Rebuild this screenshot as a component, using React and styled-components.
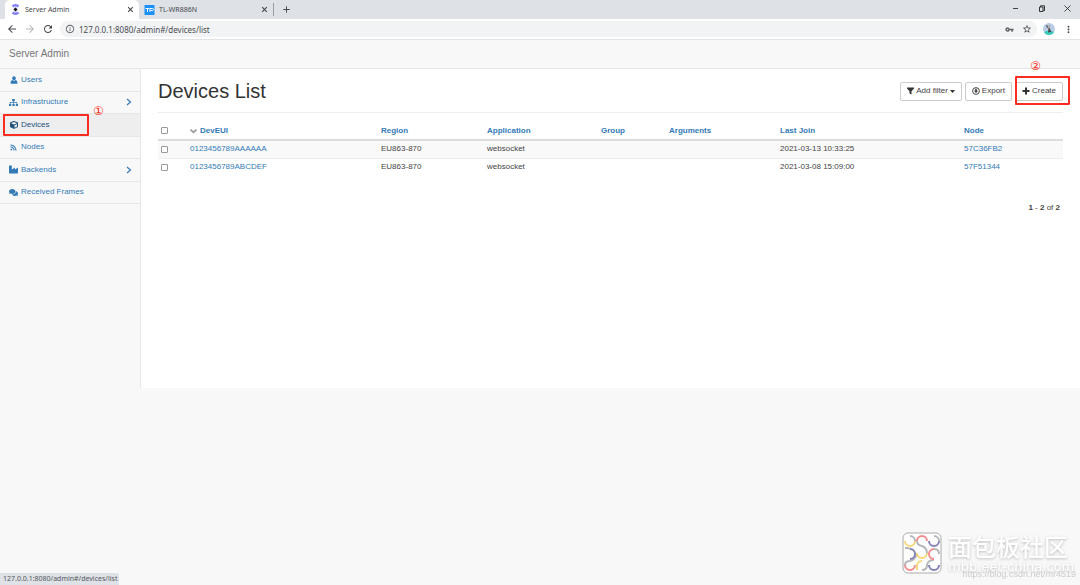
import React from 'react';
import styled, { createGlobalStyle, css } from 'styled-components';
import { FaSitemap, FaCube, FaRss, FaIndustry, FaComments } from 'react-icons/fa';
import {
  MdArrowBack, MdArrowForward, MdRefresh, MdInfoOutline, MdVpnKey, MdStarBorder, MdMoreVert, MdAdd,
} from 'react-icons/md';

const uiFont = "'Noto Sans', 'Open Sans', sans-serif";
const link = '#337ab7';

const GlobalStyle = createGlobalStyle`
  * {
    box-sizing: border-box;
  }

  body {
    margin: 0;
    background-color: #f8f8f8;
    color: #444;
    font-family: 'Liberation Sans', Arial, sans-serif;
    font-size: 8px;
    line-height: 12px;
  }

  a {
    color: ${link};
    text-decoration: none;
  }

  button {
    padding: 0;
    border: 0;
    background: none;
    color: inherit;
    font: inherit;
  }
`;

const Page = styled.div`
  display: flex;
  flex-direction: column;
  min-height: 100vh;
`;

const TabStrip = styled.div`
  display: flex;
  height: 19px;
  padding-left: 5px;
  background-color: #dee1e6;
  font-family: ${uiFont};
  font-size: 7px;
`;

const Tab = styled.div`
  display: flex;
  align-items: center;
  gap: 4px;
  width: 134px;
  padding: 0 5px;
  border-radius: 5px 5px 0 0;
  color: #45494d;
  background-color: ${props => (props.$active ? '#fff' : 'transparent')};
`;

const TabTitle = styled.span`
  flex: 1;
`;

const IconButton = styled.button`
  display: flex;
  align-items: center;
  justify-content: center;
  color: ${props => props.$color || '#45494d'};
`;

const NewTab = styled(IconButton)`
  align-self: center;
  height: 13px;
  padding-left: 7px;
  border-left: 1px solid #9a9da1;
`;

const WindowControls = styled.div`
  display: flex;
  align-items: center;
  gap: 19px;
  height: 16px;
  margin-left: auto;
  padding-right: 9px;
`;

const Toolbar = styled.div`
  display: flex;
  align-items: center;
  gap: 6px;
  height: 21px;
  padding: 0 6px;
  border-bottom: 1px solid #e2e3e5;
  background-color: #fff;
`;

const ToolbarActions = styled.div`
  display: flex;
  align-items: center;
  gap: 8px;
`;

const AddressBar = styled.div`
  display: flex;
  flex: 1;
  align-items: center;
  gap: 4px;
  height: 16px;
  padding: 0 5px;
  border-radius: 8px;
  background-color: #f1f3f4;
  color: #5f6368;
`;

const Address = styled.input`
  flex: 1;
  min-width: 0;
  padding: 0;
  border: 0;
  outline: 0;
  background: none;
  color: #4a4d51;
  font-family: ${uiFont};
  font-size: 8px;
`;

const Navbar = styled.header`
  display: flex;
  align-items: center;
  height: 29px;
  padding: 0 9px;
  border-bottom: 1px solid #e7e7e7;
`;

const Brand = styled.a`
  color: #777;
  font-size: 10px;
`;

const Body = styled.div`
  display: flex;
  min-height: 319px;
`;

const Sidebar = styled.nav`
  width: 141px;
  border-right: 1px solid #e7e7e7;
`;

const Menu = styled.ul`
  display: grid;
  grid-auto-rows: 1fr;
  min-height: 135px;
  margin: 0;
  padding: 0;
  list-style: none;
`;

const MenuItem = styled.li`
  position: relative;
  border-bottom: 1px solid #e7e7e7;
  background-color: ${props => (props.$active ? '#eee' : 'transparent')};
`;

const MenuLink = styled.a`
  display: flex;
  align-items: center;
  gap: 3px;
  height: 100%;
  padding: 0 8px 0 9px;
  color: ${props => (props.$active ? '#23527c' : link)};
`;

const MenuIcon = styled.span`
  display: flex;
  justify-content: center;
  width: 9px;
`;

const MenuText = styled.span`
  flex: 1;
`;

const callout = css`
  position: absolute;
  border: 2px solid #fb2c20;
  border-radius: 1px;
  pointer-events: none;
`;

const MenuCallout = styled.div`
  ${callout}
  inset: 0 51px 0 3px;
`;

const CreateCallout = styled.div`
  ${callout}
  inset: -6px -7px -4px 0;
`;

const CalloutNumber = styled.span`
  position: absolute;
  top: ${props => props.$top};
  left: ${props => props.$left};
  color: #fb2c20;
  font-family: 'DejaVu Sans', sans-serif;
  font-size: 12px;
`;

const Content = styled.main`
  flex: 1;
  min-width: 0;
  padding: 8px 17px;
  background-color: #fff;
`;

const TitleRow = styled.div`
  display: flex;
  align-items: center;
  justify-content: space-between;
  height: 36px;
  padding-bottom: 7px;
  border-bottom: 1px solid #eee;
`;

const Title = styled.h1`
  margin: 0;
  color: #333;
  font-size: 20px;
  font-weight: 400;
  line-height: 28px;
`;

const Actions = styled.div`
  display: flex;
  gap: 3px;
`;

const ActionWrap = styled.div`
  position: relative;
`;

const Button = styled.button`
  display: flex;
  align-items: center;
  gap: 2px;
  height: 19px;
  padding: 0 6px;
  border: 1px solid #ccc;
  border-radius: 2px;
  background-color: #fff;
  white-space: nowrap;
`;

const Table = styled.table`
  width: 100%;
  margin-top: 9px;
  border-collapse: collapse;
  table-layout: fixed;

  th,
  td {
    height: 18px;
    padding: 0 3px;
    text-align: left;
    vertical-align: middle;
  }

  th {
    border-bottom: 2px solid #ddd;
  }

  td {
    border-bottom: 1px solid #eee;
  }

  tbody tr:nth-child(odd) {
    background-color: #f9f9f9;
  }

  tbody tr:last-child td {
    border-bottom: 0;
  }
`;

const SortLink = styled.a`
  display: flex;
  align-items: center;
  gap: 3px;
`;

const Checkbox = styled.input`
  display: block;
  width: 7px;
  height: 7px;
  margin: 0;
  border: 1px solid #999;
  border-radius: 1px;
  background-color: #fff;
  appearance: none;

  &:checked {
    background-color: ${link};
  }
`;

const Pagination = styled.div`
  margin-top: 26px;
  padding-right: 3px;
  text-align: right;
`;

const StatusBar = styled.div`
  position: fixed;
  bottom: 0;
  left: 0;
  height: 12px;
  padding: 0 2px 0 3px;
  border-radius: 0 2px 0 0;
  background-color: #dee1e6;
  color: #55595e;
  font-family: ${uiFont};
  font-size: 7px;
`;

const Watermark = styled.div`
  position: fixed;
  right: 4px;
  bottom: 5px;
  display: flex;
  align-items: flex-start;
  gap: 6px;
  width: 174px;
  height: 48px;
`;

const WatermarkText = styled.div`
  color: #fff;
  font-family: 'Noto Sans CJK SC', sans-serif;
  font-size: 24px;
  font-weight: 500;
  line-height: 28px;
  text-shadow: 0 1px 3px #bbb;
  white-space: nowrap;
`;

const WatermarkSite = styled.div`
  font-family: 'DejaVu Sans', sans-serif;
  font-size: 13px;
  line-height: 14px;
`;

const WatermarkUrl = styled.div`
  position: absolute;
  right: 0;
  bottom: 0;
  color: #ccc;
  font-size: 9px;
`;

const UserIcon = () => (
  <svg width="8" height="8" viewBox="0 0 16 16" fill="currentColor">
    <ellipse cx="8" cy="4.500" rx="3.600" ry="4" />
    <path d="M4.500 8q3.500 2.500 7 0Q15 9 15 14q0 1.500-1.500 1.500h-11Q1 15.500 1 14 1 9 4.500 8z" />
  </svg>
);

const ServerIcon = () => (
  <svg width="11" height="11" viewBox="0 0 22 22" fill="none">
    <path d="M5 5q6-5 12 0M5 17q6 5 12 0" stroke="#8484f8" strokeWidth="5" />
    <path d="M7 9q4-3 8 0M7 13q4 3 8 0" stroke="#c9c9fc" strokeWidth="2" />
    <path d="M11 7l4 4-4 4-4-4z" fill="#111" />
  </svg>
);

const RouterIcon = () => (
  <svg width="11" height="10" viewBox="0 0 22 20">
    <rect x="1" width="20" height="20" rx="1" fill="#1890ff" />
    <path d="M3 7h8M7 7v7M12 14V7h5q2 0 2 2t-2 2h-4" fill="none" stroke="#fff" strokeWidth="2" />
  </svg>
);

const AvatarIcon = () => (
  <svg width="12" height="12" viewBox="0 0 24 24">
    <circle cx="12" cy="12" r="12" fill="#b9cce6" />
    <path d="M2 18q10-5 20 0-3 6-10 6T2 18z" fill="#37cdbd" />
    <path d="M6 4l4 2 4-1-1 5 4 8-7 1 1-8-4-3z" fill="#4c4a50" />
    <path d="M9 7l5-1-2 5z" fill="#e7d6b8" />
  </svg>
);

const FilterIcon = () => (
  <svg width="7" height="8" viewBox="0 0 14 16">
    <path d="M0 1h14v2L9 8.500V15l-4-2V8.500L0 3z" fill="#333" />
  </svg>
);

const CaretIcon = () => (
  <svg width="5" height="3" viewBox="0 0 10 6">
    <path d="M0 0h10L5 6z" fill="#333" />
  </svg>
);

const DownloadIcon = () => (
  <svg width="8" height="8" viewBox="0 0 16 16">
    <circle cx="8" cy="8" r="6.800" fill="none" stroke="#333" strokeWidth="1.800" />
    <path d="M6.500 3.500h3v4H12l-4 4.500-4-4.500h2.500z" fill="#333" />
  </svg>
);

const PlusIcon = () => (
  <svg width="8" height="8" viewBox="0 0 8 8">
    <path d="M4 .5v7M.5 4h7" stroke="#333" strokeWidth="2" />
  </svg>
);

const SortIcon = () => (
  <svg width="7" height="6" viewBox="0 0 7 6">
    <path d="M.5 1.500l3 2.800 3-2.800" fill="none" stroke="#999" strokeWidth="1.600" />
  </svg>
);

const ChevronIcon = () => (
  <svg width="6" height="8" viewBox="0 0 6 8">
    <path d="M1 1l3.500 3L1 7" fill="none" stroke={link} strokeWidth="1.200" />
  </svg>
);

const TabCloseIcon = () => (
  <svg width="7" height="7" viewBox="0 0 7 7">
    <path d="M1.200 1.200l4.600 4.600M5.800 1.200L1.200 5.800" stroke="#45494d" strokeWidth="1.100" />
  </svg>
);

const MinimizeIcon = () => (
  <svg width="7" height="7" viewBox="0 0 7 7">
    <path d="M1 3.500h5" stroke="#444" />
  </svg>
);

const RestoreIcon = () => (
  <svg width="7" height="7" viewBox="0 0 7 7" fill="none" stroke="#333">
    <path d="M1.500 2h3.500v4.500H1.500zM2.500 2V.8h4V5.500H5" />
  </svg>
);

const CloseIcon = () => (
  <svg width="7" height="7" viewBox="0 0 7 7">
    <path d="M.5.5l6 6M6.500.5l-6 6" stroke="#222" strokeWidth=".8" />
  </svg>
);

const WatermarkLogo = () => (
  <svg width="40" height="42" viewBox="0 0 40 42" fill="none" strokeWidth="2">
    <rect x="1" y="1" width="38" height="40" rx="5" fill="#fff" stroke="#aaa" strokeWidth="1" />
    <g stroke="#b5b8bb">
      <path d="M8 4a5 5 0 0 1 5 5M15 9q0 4 5 5 5 2 5 7M32 4a5 5 0 0 1 5 5" />
      <path d="M3 16h2a5 5 0 0 1 3 1M32 17q5 0 5 5M3 33q0-4 5-4 5-1 7-7" />
      <path d="M20 38q5 0 5-5 1-5 7-5" />
    </g>
    <path d="M3 9a5 5 0 0 0 10 0M15 21a5 5 0 0 0 10 0M15 38v-4a5 5 0 0 1 5-5" stroke="#fbd77b" />
    <path d="M15 9a5 5 0 0 1 10 0M32 17a5 5 0 0 0 0 10M3 33a5 5 0 0 0 10 0" stroke="#f38b8f" />
    <path d="M27 9a5 5 0 0 0 10 0M8 17a5 5 0 0 1 0 10M27 33a5 5 0 0 0 10 0" stroke="#8583b3" />
  </svg>
);

const menu = [
  { name: 'Users', icon: <UserIcon /> },
  { name: 'Infrastructure', icon: <FaSitemap size={9} />, nested: true },
  { name: 'Devices', icon: <FaCube size={8} />, active: true },
  { name: 'Nodes', icon: <FaRss size={7} /> },
  { name: 'Backends', icon: <FaIndustry size={9} />, nested: true },
  { name: 'Received Frames', icon: <FaComments size={9} /> },
];

const columns = [
  { name: 'DevEUI', width: 191, sorted: true },
  { name: 'Region', width: 106 },
  { name: 'Application', width: 114 },
  { name: 'Group', width: 68 },
  { name: 'Arguments', width: 111 },
  { name: 'Last Join', width: 184 },
  { name: 'Node', width: 102 },
];

const devices = [
  { eui: '0123456789AAAAAA', region: 'EU863-870', app: 'websocket', join: '2021-03-13 10:33:25', node: '57C36FB2' },
  { eui: '0123456789ABCDEF', region: 'EU863-870', app: 'websocket', join: '2021-03-08 15:09:00', node: '57F51344' },
];

const App = () => {
  return (
    <Page>
      <GlobalStyle />
      <TabStrip>
        <Tab $active>
          <ServerIcon />
          <TabTitle>Server Admin</TabTitle>
          <IconButton aria-label="Close tab"><TabCloseIcon /></IconButton>
        </Tab>
        <Tab>
          <RouterIcon />
          <TabTitle>TL-WR886N</TabTitle>
          <IconButton aria-label="Close tab"><TabCloseIcon /></IconButton>
        </Tab>
        <NewTab aria-label="New tab"><MdAdd size={11} /></NewTab>
        <WindowControls>
          <IconButton aria-label="Minimize"><MinimizeIcon /></IconButton>
          <IconButton aria-label="Restore"><RestoreIcon /></IconButton>
          <IconButton aria-label="Close"><CloseIcon /></IconButton>
        </WindowControls>
      </TabStrip>

      <Toolbar>
        <IconButton aria-label="Back"><MdArrowBack size={12} /></IconButton>
        <IconButton aria-label="Forward" $color="#b5b7ba"><MdArrowForward size={12} /></IconButton>
        <IconButton aria-label="Reload"><MdRefresh size={12} /></IconButton>
        <AddressBar>
          <MdInfoOutline size={10} />
          <Address aria-label="Address" defaultValue="127.0.0.1:8080/admin#/devices/list" />
          <ToolbarActions>
            <MdVpnKey size={9} />
            <IconButton aria-label="Bookmark"><MdStarBorder size={10} /></IconButton>
          </ToolbarActions>
        </AddressBar>
        <ToolbarActions>
          <IconButton aria-label="Profile"><AvatarIcon /></IconButton>
          <IconButton aria-label="Menu"><MdMoreVert size={11} /></IconButton>
        </ToolbarActions>
      </Toolbar>

      <Navbar>
        <Brand href="#/">Server Admin</Brand>
      </Navbar>

      <Body>
        <Sidebar>
          <Menu>
            {menu.map(({ name, icon, active, nested }) => (
              <MenuItem key={name} $active={active}>
                <MenuLink href="#/devices/list" $active={active}>
                  <MenuIcon>{icon}</MenuIcon>
                  <MenuText>{name}</MenuText>
                  {nested && <ChevronIcon />}
                </MenuLink>
                {active && <MenuCallout />}
                {active && <CalloutNumber $top="-9px" $left="93px">①</CalloutNumber>}
              </MenuItem>
            ))}
          </Menu>
        </Sidebar>

        <Content>
          <TitleRow>
            <Title>Devices List</Title>
            <Actions>
              <Button><FilterIcon />Add filter<CaretIcon /></Button>
              <Button><DownloadIcon />Export</Button>
              <ActionWrap>
                <Button><PlusIcon />Create</Button>
                <CreateCallout />
                <CalloutNumber $top="-22px" $left="15px">②</CalloutNumber>
              </ActionWrap>
            </Actions>
          </TitleRow>

          <Table>
            <colgroup>
              <col width={29} />
              {columns.map(({ name, width }) => <col key={name} width={width} />)}
            </colgroup>
            <thead>
              <tr>
                <th><Checkbox type="checkbox" aria-label="Select all" /></th>
                {columns.map(({ name, sorted }) => (
                  <th key={name}>
                    <SortLink href="#/devices/list">
                      {sorted && <SortIcon />}
                      {name}
                    </SortLink>
                  </th>
                ))}
              </tr>
            </thead>
            <tbody>
              {devices.map(({ eui, region, app, join, node }) => (
                <tr key={eui}>
                  <td><Checkbox type="checkbox" aria-label={`Select ${eui}`} /></td>
                  <td><a href="#/devices/list">{eui}</a></td>
                  <td>{region}</td>
                  <td>{app}</td>
                  <td />
                  <td />
                  <td>{join}</td>
                  <td><a href="#/devices/list">{node}</a></td>
                </tr>
              ))}
            </tbody>
          </Table>

          <Pagination>
            <b>1</b> - <b>2</b> of <b>2</b>
          </Pagination>
        </Content>
      </Body>

      <StatusBar>127.0.0.1:8080/admin#/devices/list</StatusBar>

      <Watermark>
        <WatermarkLogo />
        <WatermarkText>
          面包板社区
          <WatermarkSite>mbb.eet-china.com</WatermarkSite>
        </WatermarkText>
        <WatermarkUrl>https://blog.csdn.net/mr4519</WatermarkUrl>
      </Watermark>
    </Page>
  );
}

export default App;
